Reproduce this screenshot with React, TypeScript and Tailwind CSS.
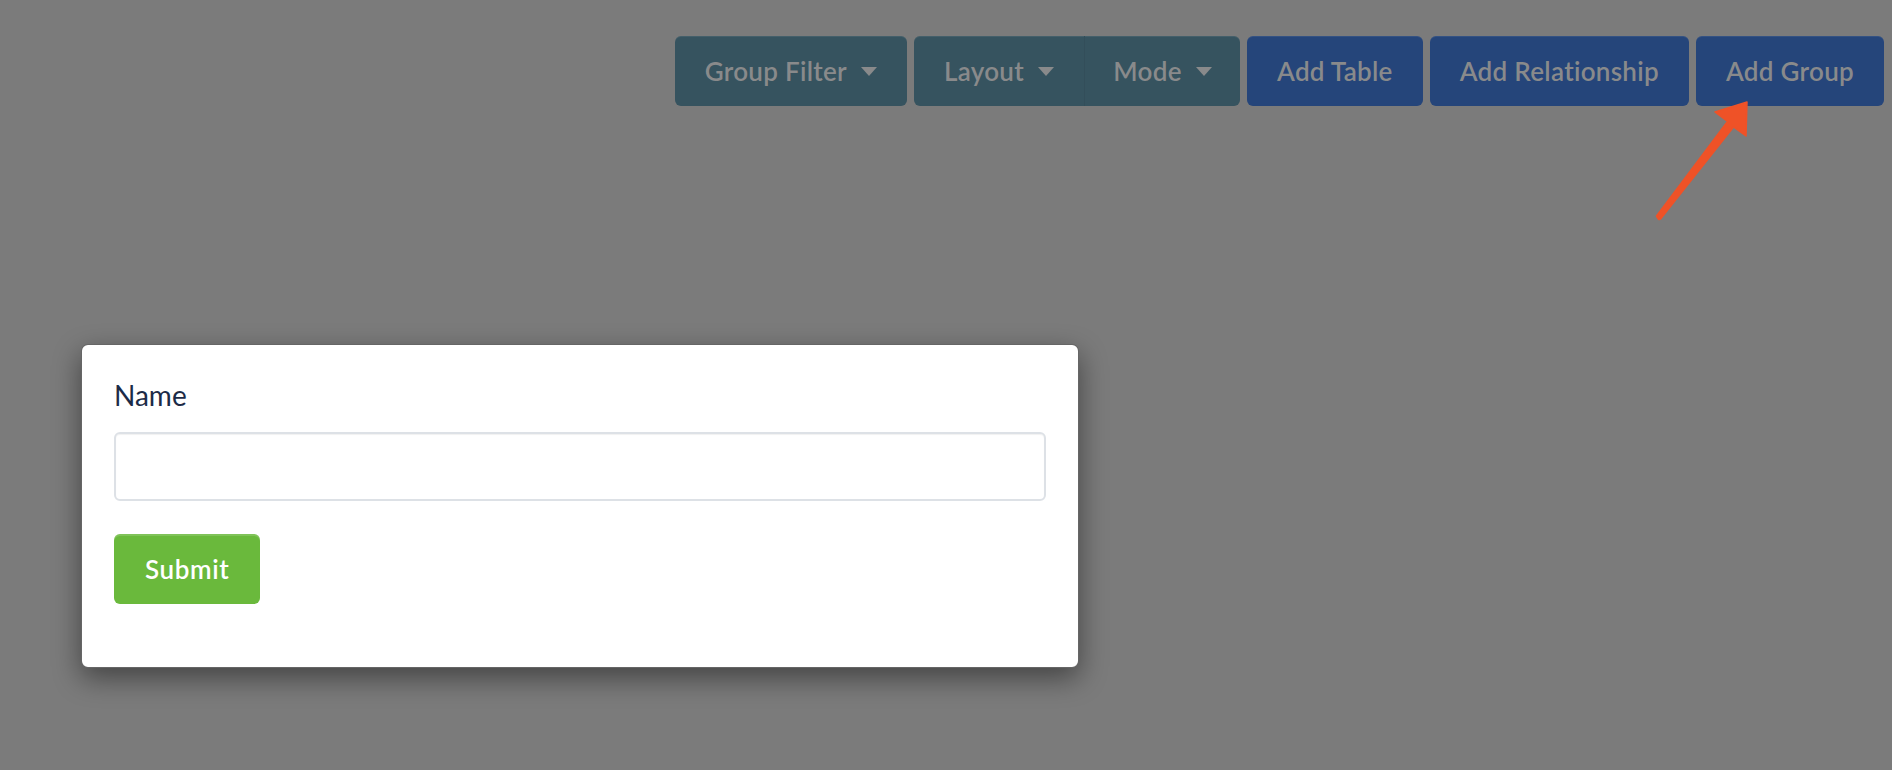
import React from 'react'

const font = { fontFamily: 'Lato, "Open Sans", sans-serif' }

function Caret() {
  return (
    <svg width="16" height="9" viewBox="0 0 16 9" className="ml-[14px] shrink-0">
      <polygon points="0,0 16,0 8,9" fill="#898a8b" />
    </svg>
  )
}

function ToolButton({
  label,
  tone,
  caret,
  className = '',
}: {
  label: string
  tone: 'teal' | 'blue'
  caret?: boolean
  className?: string
}) {
  const bg = tone === 'teal' ? 'bg-[#36535f]' : 'bg-[#25457a]'
  return (
    <button
      className={`flex h-[70px] items-center justify-center px-[30px] text-[26px] font-semibold tracking-[0.3px] text-[#898a8b] shadow-[inset_0_1px_0_rgba(255,255,255,0.07)] ${bg} ${className}`}
    >
      {label}
      {caret && <Caret />}
    </button>
  )
}

function Arrow() {
  return (
    <svg
      className="pointer-events-none absolute left-0 top-0"
      width="1892"
      height="770"
      viewBox="0 0 1892 770"
    >
      <path
        d="M1747 102 L1715 112 L1727.5 121.5 L1656.5 216 Q1658.5 221 1660.5 219 L1733.5 127 L1746 136 Z"
        fill="#ef5227"
        stroke="#ef5227"
        strokeWidth="1.5"
        strokeLinejoin="round"
      />
    </svg>
  )
}

export default function App() {
  return (
    <div className="relative h-[770px] w-full overflow-hidden bg-[#7b7b7b]" style={font}>
      {/* toolbar, dimmed under the modal backdrop */}
      <div className="flex justify-end gap-[7px] pr-[8px] pt-[36px]">
        <ToolButton label="Group Filter" tone="teal" caret className="rounded-[6px]" />
        <div className="flex">
          <ToolButton label="Layout" tone="teal" caret className="w-[171px] rounded-l-[6px] border-r border-black/5" />
          <ToolButton label="Mode" tone="teal" caret className="w-[155px] rounded-r-[6px]" />
        </div>
        <ToolButton label="Add Table" tone="blue" className="rounded-[6px]" />
        <ToolButton label="Add Relationship" tone="blue" className="rounded-[6px]" />
        <ToolButton label="Add Group" tone="blue" className="rounded-[6px]" />
      </div>

      {/* modal */}
      <div className="ml-[81px] mt-[238px] w-[998px] rounded-[7px] border border-black/60 bg-white px-[32px] pb-[63px] pt-[30px] shadow-[0_10px_28px_rgba(0,0,0,0.45)]">
        <label className="block text-[28px] leading-[40px] text-[#1c2b47]">Name</label>
        <input
          type="text"
          className="mt-[17px] block h-[69px] w-full rounded-[6px] border-2 border-[#dde1e6] bg-white px-4 text-[24px] outline-none shadow-[inset_0_1px_1px_rgba(0,0,0,0.06)]"
        />
        <button className="mt-[33px] flex h-[70px] items-center rounded-[6px] bg-[#6ab93c] px-[31px] text-[26px] font-semibold tracking-[0.6px] text-white shadow-[inset_0_2px_0_rgba(255,255,255,0.15)]">
          Submit
        </button>
      </div>

      <Arrow />
    </div>
  )
}
